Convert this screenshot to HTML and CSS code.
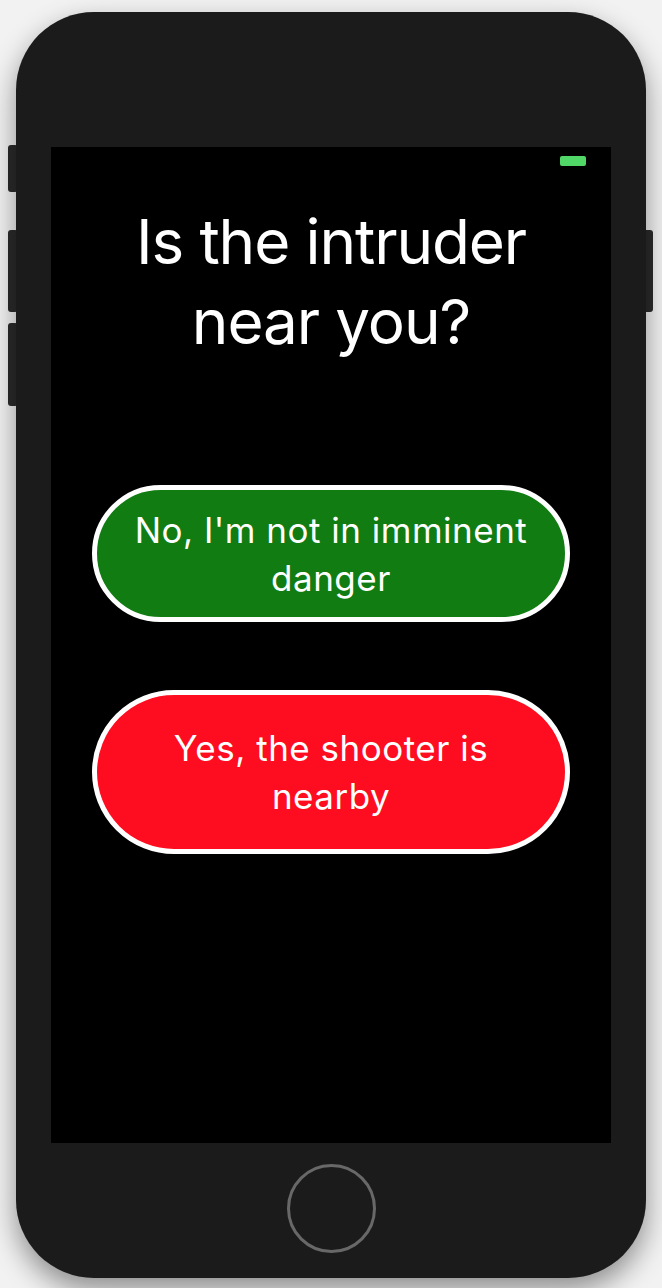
FILE: index.html
```html
<!DOCTYPE html>
<html lang="en">
<head>
<meta charset="utf-8">
<title>Is the intruder near you?</title>
<link rel="stylesheet" href="styles.css">
</head>
<body>
  <div class="device">
    <span class="side-btn side-mute"></span>
    <span class="side-btn side-vol-up"></span>
    <span class="side-btn side-vol-down"></span>
    <span class="side-btn side-power"></span>
    <div class="screen">
      <div class="status-bar">
        <span class="battery"></span>
      </div>
      <h1 class="question">Is the intruder<br>near you?</h1>
      <div class="answers">
        <button class="answer answer-no">No, I'm not in imminent danger</button>
        <button class="answer answer-yes">Yes, the shooter is nearby</button>
      </div>
    </div>
    <div class="home-area">
      <span class="home-button"></span>
    </div>
  </div>
</body>
</html>
```

FILE: styles.css
```css
html, body {
  margin: 0;
  padding: 0;
}

body {
  width: 662px;
  height: 1288px;
  background: #f2f2f2;
  overflow: hidden;
  font-family: "Inter", "Roboto", "Liberation Sans", sans-serif;
}

.device {
  position: relative;
  box-sizing: border-box;
  width: 630px;
  height: 1266px;
  margin: 12px 0 0 16px;
  padding: 135px 35px 0 35px;
  background: #1b1b1b;
  border-radius: 78px;
  box-shadow: 0 12px 28px rgba(0, 0, 0, 0.42);
  display: flex;
  flex-direction: column;
}

.side-btn {
  position: absolute;
  width: 10px;
  background: #2b2b2b;
  border-radius: 3px;
  z-index: -1;
}

.side-mute { left: -8px; top: 133px; height: 47px; }
.side-vol-up { left: -8px; top: 218px; height: 82px; }
.side-vol-down { left: -8px; top: 311px; height: 83px; }
.side-power { right: -7px; top: 218px; height: 82px; }

.screen {
  height: 996px;
  background: #000;
  display: flex;
  flex-direction: column;
  align-items: center;
  color: #fff;
}

.status-bar {
  align-self: stretch;
  display: flex;
  justify-content: flex-end;
  padding: 9px 25px 0 0;
}

.battery {
  width: 26px;
  height: 10px;
  background: #51d767;
  border-radius: 2px;
}

.question {
  margin: 36px 0 0 0;
  font-weight: 400;
  font-size: 62px;
  line-height: 80px;
  text-align: center;
  letter-spacing: -1.1px;
}

.answers {
  margin-top: 123px;
  display: flex;
  flex-direction: column;
  gap: 68px;
}

.answer {
  box-sizing: border-box;
  width: 478px;
  border: 5px solid #fff;
  border-radius: 90px;
  color: #fff;
  font-family: inherit;
  font-size: 35px;
  line-height: 48px;
  letter-spacing: 0.5px;
  padding: 0 30px;
  text-align: center;
  display: flex;
  align-items: center;
  justify-content: center;
}

.answer-no {
  height: 137px;
  background: #107c12;
}

.answer-yes {
  height: 164px;
  background: #fd0d1f;
  padding: 0 70px;
}

.home-area {
  flex: 1;
  display: flex;
  justify-content: center;
  align-items: center;
  padding-bottom: 4px;
}

.home-button {
  box-sizing: border-box;
  width: 89px;
  height: 89px;
  border: 3px solid #686868;
  border-radius: 50%;
}
```
